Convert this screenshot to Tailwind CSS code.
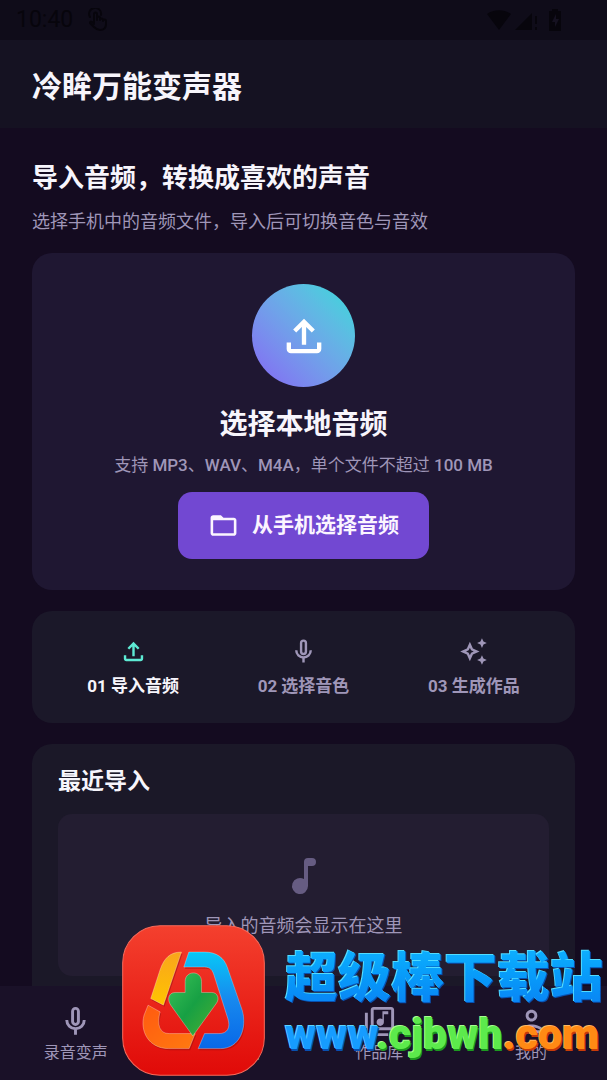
<!DOCTYPE html>
<html lang="zh-CN">
<head>
    <meta charset="utf-8">
    <meta name="viewport" content="width=device-width, initial-scale=1">
    <title>冷眸万能变声器</title>
    <script src="https://cdn.jsdelivr.net/npm/@tailwindcss/browser@4"></script>
</head>
<body class="relative flex h-screen flex-col overflow-hidden bg-[#140b20] font-[Roboto,'Noto_Sans_CJK_SC',sans-serif] text-[#9f96b8]">
    <!-- status bar -->
    <div class="flex h-10 shrink-0 items-center justify-between bg-[#0f0c19] pr-10 pl-4 text-[#07050c]">
        <div class="flex items-center gap-3">
            <span class="text-[23px] leading-6">10:40</span>
            <svg class="size-6" viewBox="0 0 24 24" fill="none" stroke="currentColor" stroke-width="2" stroke-linecap="round" stroke-linejoin="round">
                <path d="M9 15V6a1.5 1.5 0 0 1 3 0v6-2a1.5 1.5 0 0 1 3 0v2a1.5 1.5 0 0 1 3 0v1a1.5 1.5 0 0 1 3 0v3c0 4-2 6-6 6-3 0-4-1-6-3l-4-4c0-2 2-2 4 1"/>
                <path d="M5 9a6 6 0 1 1 11-2"/>
            </svg>
        </div>
        <div class="flex items-center gap-1">
            <svg class="size-6" viewBox="0 0 24 24" fill="currentColor"><path d="M0 6c7-5 17-5 24 0L12 22z"/></svg>
            <svg class="size-6" viewBox="0 0 24 24" fill="currentColor"><path d="M0 22 17 5v17zM20 8h2v8h-2zM20 19h2v3h-2z"/></svg>
            <svg class="size-6" viewBox="0 0 24 24"><path fill="currentColor" d="M6 3h3V1h6v2h3v20H6z"/><path fill="#151120" d="m13 6-4 8h3v5l4-8h-3z"/></svg>
        </div>
    </div>

    <header class="flex h-[88px] shrink-0 items-center bg-[#151222] px-8 pt-[6px]">
        <h1 class="text-[30px] leading-10 font-bold text-[#f7f5fc]">冷眸万能变声器</h1>
    </header>

    <main class="min-h-0 flex-1 overflow-hidden px-8 pt-[30px]">
        <h2 class="text-[26px] leading-10 font-bold text-[#f7f5fc]">导入音频，转换成喜欢的声音</h2>
        <p class="mt-[10px] text-lg leading-7">选择手机中的音频文件，导入后可切换音色与音效</p>

        <section class="mt-[17px] flex flex-col items-center rounded-[20px] bg-[#1f1732] pt-[31px] pb-[31px]">
            <div class="flex size-[103px] items-center justify-center rounded-full bg-linear-to-tr from-[#8463f4] to-[#2bdcd8] text-white">
                <svg class="size-[52px]" viewBox="0 0 24 24" fill="currentColor"><path d="M4 15v3c0 1.1.9 2 2 2h12c1.1 0 2-.9 2-2v-3h-2v3H6v-3H4zm3-6 1.410 1.410L11 7.830V16h2V7.830l2.590 2.580L17 9l-5-5-5 5z"/></svg>
            </div>
            <h3 class="mt-[18px] text-[28px] leading-10 font-bold text-[#f7f5fc]">选择本地音频</h3>
            <p class="mt-[6px] text-[17px] leading-7">支持 <span class="font-medium">MP3</span>、<span class="font-medium">WAV</span>、<span class="font-medium">M4A</span>，单个文件不超过 <span class="font-medium">100 MB</span></p>
            <button type="button" class="mt-[13px] flex h-[67px] items-center gap-[13px] rounded-[14px] bg-[#7248d2] px-[30px] text-[21px] font-bold text-[#fbf5ff]">
                <svg class="size-[31px]" viewBox="0 0 24 24" fill="currentColor"><path d="M20 6h-8l-2-2H4c-1.1 0-2 .9-2 2v12c0 1.1.9 2 2 2h16c1.1 0 2-.9 2-2V8c0-1.1-.9-2-2-2zm0 12H4V8h16v10z"/></svg>
                从手机选择音频
            </button>
        </section>

        <ol class="mt-[21px] grid grid-cols-3 rounded-[20px] bg-[#1b1829] px-4 pt-[26px] pb-[25px] text-[17px] leading-6 font-bold">
            <li class="flex flex-col items-center gap-2 text-[#f7f5fc]">
                <svg class="size-[29px] text-[#5eead4]" viewBox="0 0 24 24" fill="currentColor"><path d="M4 15v3c0 1.1.9 2 2 2h12c1.1 0 2-.9 2-2v-3h-2v3H6v-3H4zm3-6 1.410 1.410L11 7.830V16h2V7.830l2.590 2.580L17 9l-5-5-5 5z"/></svg>
                01 导入音频
            </li>
            <li class="flex flex-col items-center gap-2">
                <svg class="size-[29px]" viewBox="0 0 24 24" fill="none" stroke="currentColor" stroke-width="2"><rect x="10" y="3" width="4" height="11" rx="2"/><path d="M6 11a6 6 0 0 0 12 0M12 17v4"/></svg>
                02 选择音色
            </li>
            <li class="flex flex-col items-center gap-2">
                <svg class="size-[29px]" viewBox="0 0 24 24" fill="currentColor"><path d="m19 9 1.250-2.750L23 5l-2.750-1.250L19 1l-1.250 2.750L15 5l2.750 1.250L19 9zm0 6-1.250 2.750L15 19l2.750 1.250L19 23l1.250-2.750L23 19l-2.750-1.250L19 15zm-7.500-5.500L9 4 6.500 9.500 1 12l5.500 2.500L9 20l2.500-5.500L17 12l-5.500-2.500zm-1.510 3.490L9 15.170l-.99-2.180L5.830 12l2.180-.99L9 8.830l.99 2.180 2.180.99-2.180.99z"/></svg>
                03 生成作品
            </li>
        </ol>

        <section class="mt-[21px] rounded-[20px] bg-[#1b1828] px-[26px] pt-[22px] pb-8">
            <h2 class="text-[23px] leading-8 font-bold text-[#f7f5fc]">最近导入</h2>
            <div class="mt-4 flex h-[162px] flex-col items-center rounded-[14px] bg-[#231d31] pt-[38px]">
                <svg class="size-12 text-[#665c82]" viewBox="0 0 24 24" fill="currentColor"><path d="M14 3a2 2 0 0 0-2 2v8.550A4 4 0 1 0 14 17V7h2a2 2 0 0 0 0-4z"/></svg>
                <p class="mt-3 text-lg leading-7">导入的音频会显示在这里</p>
            </div>
        </section>
    </main>

    <nav class="grid h-[94px] shrink-0 grid-cols-4 bg-[#1a1128] pt-[18px] text-base leading-6">
        <a href="#record" class="flex flex-col items-center gap-[2px]">
            <svg class="size-[35px]" viewBox="0 0 24 24" fill="none" stroke="currentColor" stroke-width="2"><rect x="10" y="3" width="4" height="11" rx="2"/><path d="M6 11a6 6 0 0 0 12 0M12 17v4"/></svg>
            录音变声
        </a>
        <a href="#import" class="flex flex-col items-center gap-[2px] text-[#5eead4]">
            <svg class="size-[35px]" viewBox="0 0 24 24" fill="currentColor"><path d="M4 15v3c0 1.1.9 2 2 2h12c1.1 0 2-.9 2-2v-3h-2v3H6v-3H4zm3-6 1.410 1.410L11 7.830V16h2V7.830l2.590 2.580L17 9l-5-5-5 5z"/></svg>
            导入音频
        </a>
        <a href="#works" class="flex flex-col items-center gap-[2px]">
            <svg class="size-[35px]" viewBox="0 0 24 24" fill="currentColor"><path d="M20 2H8c-1.1 0-2 .9-2 2v12c0 1.1.9 2 2 2h12c1.1 0 2-.9 2-2V4c0-1.1-.9-2-2-2zm0 14H8V4h12v12zm-7.500-1c1.380 0 2.500-1.120 2.500-2.500V7h3V5h-4v5.510c-.42-.32-.93-.51-1.500-.51-1.380 0-2.500 1.120-2.500 2.500s1.120 2.500 2.500 2.500zM4 6H2v14c0 1.1.9 2 2 2h14v-2H4V6z"/></svg>
            作品库
        </a>
        <a href="#me" class="flex flex-col items-center gap-[2px]">
            <svg class="size-[35px]" viewBox="0 0 24 24" fill="currentColor"><path d="M12 6c1.1 0 2 .9 2 2s-.9 2-2 2-2-.9-2-2 .9-2 2-2m0 10c2.700 0 5.800 1.290 6 2H6c.23-.72 3.310-2 6-2m0-12C9.790 4 8 5.790 8 8s1.790 4 4 4 4-1.790 4-4-1.790-4-4-4zm0 10c-2.670 0-8 1.340-8 4v2h16v-2c0-2.660-5.330-4-8-4z"/></svg>
            我的
        </a>
    </nav>

    <!-- download site badge -->
    <div class="absolute right-1 bottom-1 flex items-center gap-5 font-['Noto_Sans_CJK_SC',sans-serif] font-black whitespace-nowrap">
        <svg class="h-[151px] w-[143px]" viewBox="40 43 428 452">
            <defs>
                <linearGradient id="red" x1="0" y1="0" x2="0" y2="1"><stop offset="0" stop-color="#f4402e"/><stop offset="1" stop-color="#e00a08"/></linearGradient>
                <linearGradient id="blue" x1="0" y1="0" x2="0" y2="1"><stop offset="0" stop-color="#08c8f6"/><stop offset=".5" stop-color="#1788ee"/><stop offset="1" stop-color="#0868e8"/></linearGradient>
                <linearGradient id="yellow" x1="0" y1="0" x2="0" y2="1"><stop offset="0" stop-color="#f9a51c"/><stop offset="1" stop-color="#ffc400"/></linearGradient>
                <linearGradient id="orange" x1="0" y1="0" x2="1" y2="1"><stop offset="0" stop-color="#ff5a10"/><stop offset="1" stop-color="#ff7a10"/></linearGradient>
                <linearGradient id="green" x1="0" y1="0" x2="1" y2="1"><stop offset="0" stop-color="#3cc258"/><stop offset=".5" stop-color="#17a044"/><stop offset="1" stop-color="#4caf30"/></linearGradient>
            </defs>
            <rect x="42" y="45" width="424" height="448" rx="112" fill="url(#red)" stroke="#f86a5a" stroke-width="3"/>
            <g fill="#8c0a08" opacity=".45" transform="translate(3 5)">
                <path d="M218 124 164 283 126 263 154 177C166 142 184 124 218 124Z"/>
                <path d="M240 124H287C323 124 346 141 356 171L400 298C416 351 392 413 335 413H268L287 368H330C356 368 365 350 357 324L316 195C311 178 304 169 287 169H225Z"/>
                <path d="M118 283 154 303C144 341 152 368 181 368H259L241 413H180C119 413 93 360 106 313Z"/>
            </g>
            <g stroke="#ffffff" stroke-opacity=".45" stroke-width="2">
                <path fill="url(#yellow)" d="M218 124 164 283 126 263 154 177C166 142 184 124 218 124Z"/>
                <path fill="url(#blue)" d="M240 124H287C323 124 346 141 356 171L400 298C416 351 392 413 335 413H268L287 368H330C356 368 365 350 357 324L316 195C311 178 304 169 287 169H225Z"/>
                <path fill="url(#orange)" d="M118 283 154 303C144 341 152 368 181 368H259L241 413H180C119 413 93 360 106 313Z"/>
                <path fill="url(#green)" d="M229 212C229 178 278 178 278 212V245H309C326 245 333 264 322 278L252 375 186 283C174 266 180 245 199 245H229Z"/>
            </g>
        </svg>
        <div class="flex flex-col gap-1">
            <p class="bg-linear-to-b from-[#10b4ff] to-[#0a84f4] bg-clip-text text-[53px] leading-[62px] text-transparent [filter:drop-shadow(-1px_-1px_0_#52dcff)_drop-shadow(1px_1px_0_#0850b0)]">超级棒下载站</p>
            <p class="font-[Roboto,sans-serif] text-[43px] leading-[50px] font-black"><span class="text-[#169cff] [text-shadow:-1px_-1px_0_#5cd4ff,1px_2px_0_#0850b0]">www</span><span class="text-[#5cea4c] [text-shadow:-1px_-1px_0_#a6ff90,1px_2px_0_#1c9a20]">.cjbwh</span><span class="text-[#ff8a14] [text-shadow:-1px_-1px_0_#ffb860,1px_2px_0_#c83c08]">.com</span></p>
        </div>
    </div>
</body>
</html>
